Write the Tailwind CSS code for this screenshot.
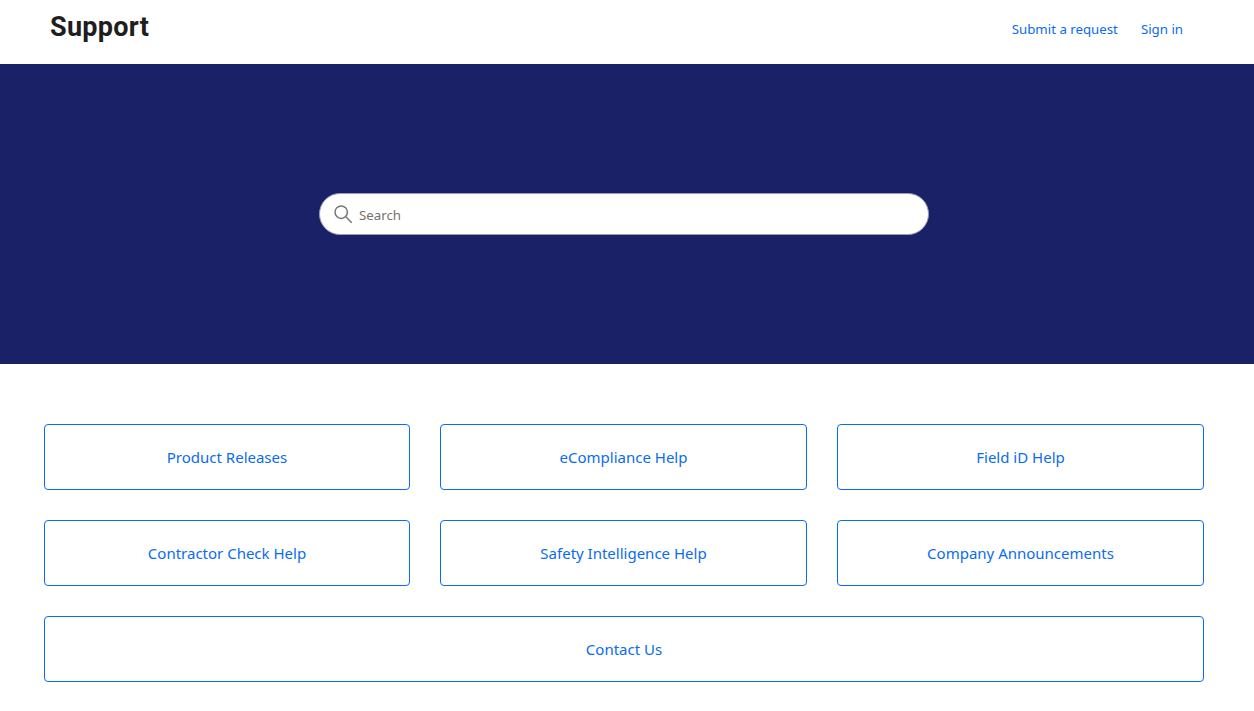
<!DOCTYPE html>
<html lang="en">
<head>
<meta charset="utf-8">
<title>Support</title>
<script src="https://cdn.jsdelivr.net/npm/@tailwindcss/browser@4"></script>
</head>
<body class="bg-white font-['Noto_Sans','Open_Sans',sans-serif]">
<header class="h-16 flex items-start justify-between pl-[50px] pr-[71px]">
  <a class="mt-[9px] text-[27px] leading-9 font-bold tracking-[0.3px] text-[#1e1e1e] font-['Roboto',sans-serif]">Support</a>
  <nav class="flex gap-[23px] mt-[19px] text-[13.25px] leading-5 text-[#0a6cf0]">
    <a>Submit a request</a>
    <a>Sign in</a>
  </nav>
</header>
<section class="h-[300px] bg-[#1a2167] flex justify-center pt-[129px] pr-[6px]">
  <div class="w-[610px] h-[42px] bg-white rounded-full border border-[#9a9db5] flex items-center pl-[14px] gap-[7px] pb-px">
    <svg class="w-[18px] h-[18px]" viewBox="0 0 18 18" fill="none" stroke="#777" stroke-width="1.5"><circle cx="7.2" cy="7.2" r="6.2"/><path d="M11.8 11.8L18 18"/></svg>
    <span class="text-[13.25px] leading-5 text-[#77706c] mt-0.5">Search</span>
  </div>
</section>
<main class="px-[44px] pt-[60px] grid grid-cols-[366px_367px_367px] gap-[30px] text-[15px] leading-5 text-[#0a6cf0] w-[1248px]">
  <a class="h-[66px] flex items-center justify-center border border-[#0a6cf0] rounded">Product Releases</a>
  <a class="h-[66px] flex items-center justify-center border border-[#0a6cf0] rounded">eCompliance Help</a>
  <a class="h-[66px] flex items-center justify-center border border-[#0a6cf0] rounded">Field iD Help</a>
  <a class="h-[66px] flex items-center justify-center border border-[#0a6cf0] rounded">Contractor Check Help</a>
  <a class="h-[66px] flex items-center justify-center border border-[#0a6cf0] rounded">Safety Intelligence Help</a>
  <a class="h-[66px] flex items-center justify-center border border-[#0a6cf0] rounded">Company Announcements</a>
  <a class="col-span-3 h-[66px] flex items-center justify-center border border-[#0a6cf0] rounded">Contact Us</a>
</main>
</body>
</html>
